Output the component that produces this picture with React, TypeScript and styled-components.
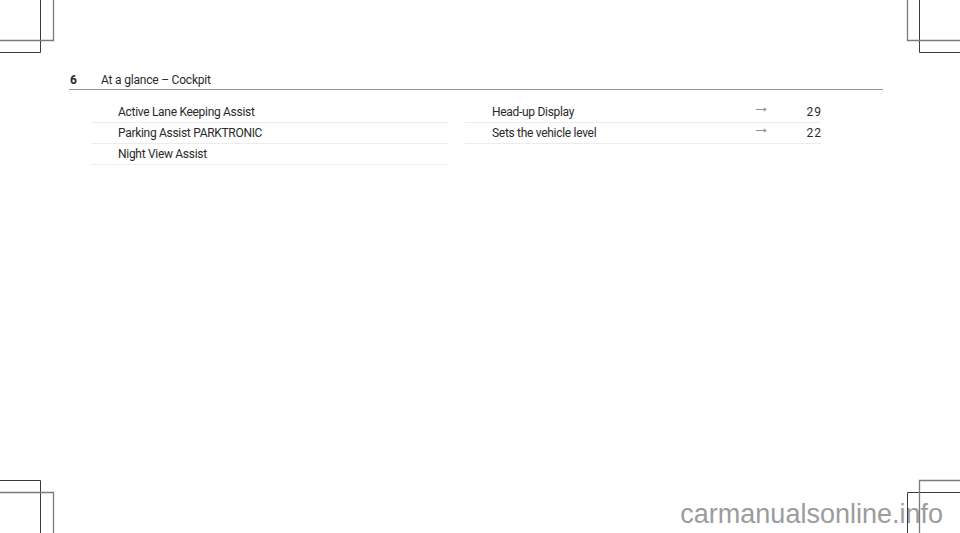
import styled, { createGlobalStyle } from "styled-components";

type Entry = {
    title: string
    page?: string
}

const leftEntries: Entry[] = [
    { title: "Active Lane Keeping Assist" },
    { title: "Parking Assist PARKTRONIC" },
    { title: "Night View Assist" },
]

const rightEntries: Entry[] = [
    { title: "Head-up Display", page: "29" },
    { title: "Sets the vehicle level", page: "22" },
]

export default function App() {
    return (
        <PageStyled>
            <GlobalStyle />
            <Header>
                <span className="number">6</span>
                <span className="title">At a glance – Cockpit</span>
            </Header>
            <Columns>
                <Column>
                    {leftEntries.map((entry) => (
                        <IndexRow key={entry.title} entry={entry} />
                    ))}
                </Column>
                <Column>
                    {rightEntries.map((entry) => (
                        <IndexRow key={entry.title} entry={entry} />
                    ))}
                </Column>
            </Columns>
            <Watermark>carmanualsonline.info</Watermark>
            <CropMarks />
        </PageStyled>
    )
}

function IndexRow({ entry }: { entry: Entry }) {
    return (
        <RowStyled>
            <span className="title">{entry.title}</span>
            <span className="arrow">
                {entry.page && (
                    <svg width="11" height="5" viewBox="0 0 11 5">
                        <path d="M0 2.5 H10" stroke="#8a9090" strokeWidth="1" />
                        <path d="M7.5 0.8 L10.4 2.5 L7.5 4.2" stroke="#8a9090" strokeWidth="0.9" fill="none" />
                    </svg>
                )}
            </span>
            <span className="page">{entry.page ?? ""}</span>
        </RowStyled>
    )
}

function CropMarks() {
    return (
        <CropSvg width="960" height="533" viewBox="0 0 960 533">
            <g stroke="#3a3a3a" strokeWidth="1" fill="none">
                <path d="M40.5 0 V52.5 H0" />
                <path d="M919.5 0 V52.5 H960" />
                <path d="M40.5 533 V480.5 H0" />
                <path d="M907.5 533 V492.5 H960" />
            </g>
            <g stroke="#7a7a7a" strokeWidth="1.3" fill="none">
                <path d="M53.5 0 V40.5 H0" />
                <path d="M907.5 0 V40.5 H960" />
                <path d="M53.5 533 V492.5 H0" />
                <path d="M919.5 533 V480.5 H960" />
            </g>
        </CropSvg>
    )
}

const GlobalStyle = createGlobalStyle`
    html, body {
        margin: 0;
        padding: 0;
        background: #ffffff;
    }
`

const PageStyled = styled.div`
    position: relative;
    box-sizing: border-box;
    width: 960px;
    height: 533px;
    padding-top: 73px;
    overflow: hidden;
    background: #ffffff;
    font-family: Roboto, "Liberation Sans", sans-serif;
    color: #2a2a2a;
`

const Header = styled.div`
    box-sizing: border-box;
    margin-left: 69px;
    width: 814px;
    height: 17px;
    display: flex;
    align-items: flex-start;
    border-bottom: 1.5px solid #8c9494;
    font-size: 12px;
    line-height: 14px;

    .number {
        width: 31px;
        padding-left: 1px;
        font-weight: 700;
    }

    .title {
        letter-spacing: -0.2px;
    }
`

const Columns = styled.div`
    margin-top: 12px;
    margin-left: 91px;
    width: 730px;
    display: grid;
    grid-template-columns: 357px 356px;
    column-gap: 17px;
    align-items: start;
`

const Column = styled.div`
    display: flex;
    flex-direction: column;
`

const RowStyled = styled.div`
    box-sizing: border-box;
    height: 21px;
    display: grid;
    grid-template-columns: 1fr 11px 54px;
    align-items: center;
    padding-left: 27px;
    border-bottom: 1.5px solid #ececec;
    font-size: 12px;
    line-height: 20px;

    .title {
        letter-spacing: -0.3px;
        white-space: nowrap;
    }

    .arrow {
        display: flex;
        align-self: start;
        margin-top: 5px;
        height: 5px;
    }

    .page {
        text-align: right;
        letter-spacing: 1px;
        margin-right: -1px;
    }
`

const Watermark = styled.div`
    position: absolute;
    right: 17px;
    bottom: 4px;
    font-family: "Liberation Sans", Arial, sans-serif;
    font-size: 27px;
    line-height: 30px;
    color: #9c9c9c;
`

const CropSvg = styled.svg`
    position: absolute;
    top: 0;
    left: 0;
    pointer-events: none;
`
